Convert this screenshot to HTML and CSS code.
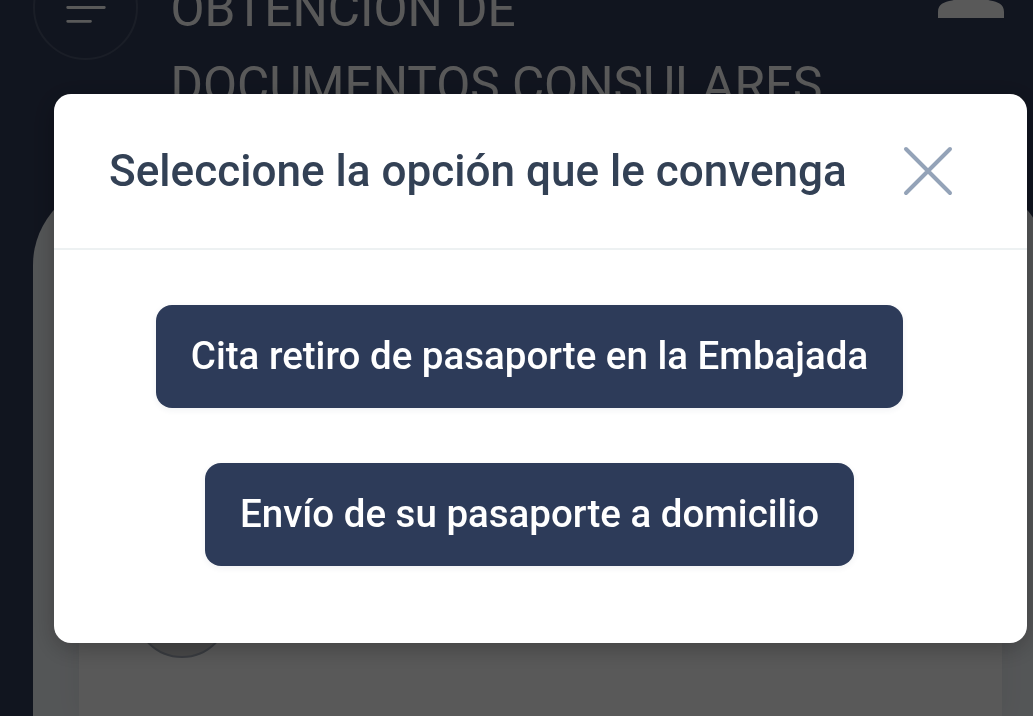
FILE: index.html
```
<!DOCTYPE html>
<html lang="es">
<head>
    <meta charset="UTF-8">
    <meta name="viewport" content="width=device-width, initial-scale=1.0">
    <title>Obtención de documentos consulares</title>
    <link rel="stylesheet" href="styles.css">
</head>
<body>

    <header class="header">
        <button class="menu-button" aria-label="Menú">
            <svg width="40" height="32" viewBox="0 0 40 32" fill="none" stroke="#fff" stroke-width="2.800" stroke-linecap="round">
                <path d="M1.700 2.500H27M1.700 15.500H38.300M1.700 29.300H24.500"/>
            </svg>
        </button>
        <h1 class="page-title">OBTENCIÓN DE DOCUMENTOS CONSULARES</h1>
        <svg class="user-icon" width="66" height="66" viewBox="0 0 66 66" fill="#fff">
            <circle cx="33" cy="22" r="18"/>
            <path d="M0 66V60C0 52 6 50 14 48.500Q33 43 52 48.500C60 50 66 52 66 60V66Z"/>
        </svg>
    </header>

    <main class="content">
        <section class="card">
            <div class="avatar"></div>
        </section>
    </main>

    <div class="overlay">
        <div class="modal" role="dialog" aria-labelledby="modalTitle">
            <div class="modal-header">
                <h2 class="modal-title" id="modalTitle">Seleccione la opción que le convenga</h2>
                <button class="close-button" aria-label="Cerrar">
                    <svg width="50" height="50" viewBox="0 0 50 50" fill="none" stroke="#94a3b8" stroke-width="4" stroke-linecap="round">
                        <path d="M3 3L47 47M47 3L3 47"/>
                    </svg>
                </button>
            </div>
            <div class="modal-body">
                <button class="option-button">Cita retiro de pasaporte en la Embajada</button>
                <button class="option-button">Envío de su pasaporte a domicilio</button>
            </div>
        </div>
    </div>

</body>
</html>
```

FILE: styles.css
```
* {
    box-sizing: border-box;
}
body {
    display: flex;
    flex-direction: column;
    margin: 0;
    height: 100vh;
    overflow: hidden;
    font-family: Roboto, sans-serif;
    background-color: #313c59;
}
button {
    padding: 0;
    border: none;
    background: none;
    font-family: inherit;
    cursor: pointer;
}
.header {
    display: flex;
    align-items: flex-start;
    flex: none;
    height: 230px;
    margin-top: -48px;
    padding: 0 29px 0 33px;
}
.menu-button {
    display: flex;
    align-items: center;
    justify-content: center;
    flex: none;
    width: 105px;
    height: 105px;
    margin-top: 3px;
    border: 2px solid #4c566f;
    border-radius: 50%;
}
.page-title {
    width: 665px;
    margin: 0 0 0 32.5px;
    padding-top: 19px;
    font-size: 49.5px;
    font-weight: 400;
    line-height: 76px;
    color: #fff;
}
.user-icon {
    flex: none;
    margin-left: auto;
}
.content {
    display: flex;
    flex: 1;
    width: 1015px;
    margin-left: 33px;
    padding: 55px 46px 0;
    border-radius: 83px 83px 0 0;
    background-color: #f1f5f9;
}
.card {
    flex: 1;
    padding: 325px 0 0 55px;
    background-color: #fff;
    box-shadow: 0 0 24px rgba(0, 0, 0, 0.06);
}
.avatar {
    width: 96px;
    height: 96px;
    border: 2px solid #a3abb8;
    border-radius: 50%;
    background-color: #cfcfd1;
}
.overlay {
    position: fixed;
    inset: 0;
    padding: 94px 6px 0 54px;
    background-color: rgba(0, 0, 0, 0.65);
}
.modal {
    height: 549px;
    border-radius: 17px;
    background-color: #fff;
    box-shadow: 0 6px 24px rgba(0, 0, 0, 0.25);
}
.modal-header {
    display: flex;
    align-items: center;
    justify-content: space-between;
    height: 156px;
    padding: 0 74px 0 55px;
    border-bottom: 2px solid #edf1f2;
}
.modal-title {
    margin: 0;
    font-size: 44.08px;
    font-weight: 500;
    white-space: nowrap;
    color: #334155;
}
.close-button svg {
    display: block;
}
.modal-body {
    display: flex;
    flex-direction: column;
    align-items: center;
    gap: 55px;
    padding: 55px 22px 0 0;
}
.option-button {
    height: 103px;
    padding: 0 35.25px 2px;
    border-radius: 16px;
    background-color: #2d3b59;
    box-shadow: 0 2px 6px rgba(45, 59, 89, 0.07);
    font-size: 38.5px;
    font-weight: 500;
    color: #fff;
}
```
